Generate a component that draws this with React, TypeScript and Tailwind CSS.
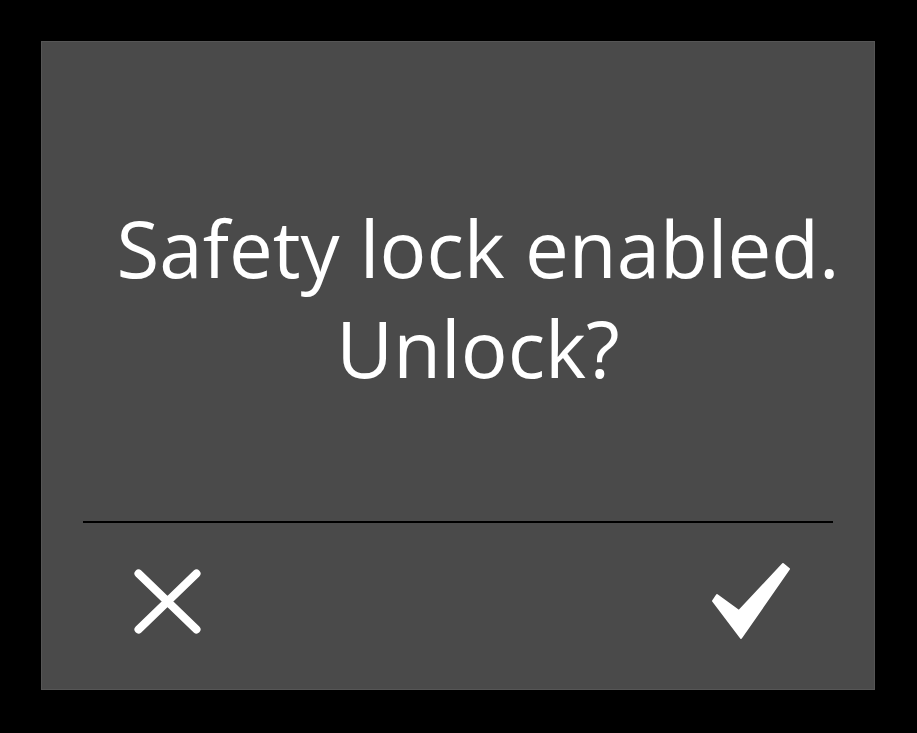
import React from 'react';

const CloseIcon: React.FC = () => (
  <svg width="71" height="69" viewBox="0 0 71 69" fill="none">
    <path d="M6.5 6.5L64.5 62.5M64.5 6.5L6.5 62.5" stroke="white" strokeWidth={8} strokeLinecap="round" />
  </svg>
);

const CheckIcon: React.FC = () => (
  <svg width="86" height="84" viewBox="0 0 86 84" fill="white">
    <polygon
      points="9,36 31,52 75,5 81,10 33,79 5,42"
      stroke="white"
      strokeWidth={2}
      strokeLinejoin="round"
    />
  </svg>
);

const App: React.FC = () => {
  return (
    <div className="w-[917px] h-[733px] bg-black pt-[41px] pl-[41px] pr-[42px] pb-[43px]">
      <div
        className="w-full h-full bg-[#4a4a4a] border border-[#565656] flex flex-col"
        style={{ fontFamily: '"Open Sans", "Noto Sans", sans-serif' }}
      >
        <div className="h-[479px] pt-[156px] pl-[40px] text-white text-center text-[78px] leading-[100px] tracking-[0px]">
          <p>Safety lock enabled.</p>
          <p>Unlock?</p>
        </div>
        <div className="mx-[41px] h-[2px] bg-black" />
        <div className="flex-1 flex justify-between pl-[90px] pr-[80px]">
          <div className="pt-[44px]">
            <CloseIcon />
          </div>
          <div className="pt-[36px]">
            <CheckIcon />
          </div>
        </div>
      </div>
    </div>
  );
};

export default App;
